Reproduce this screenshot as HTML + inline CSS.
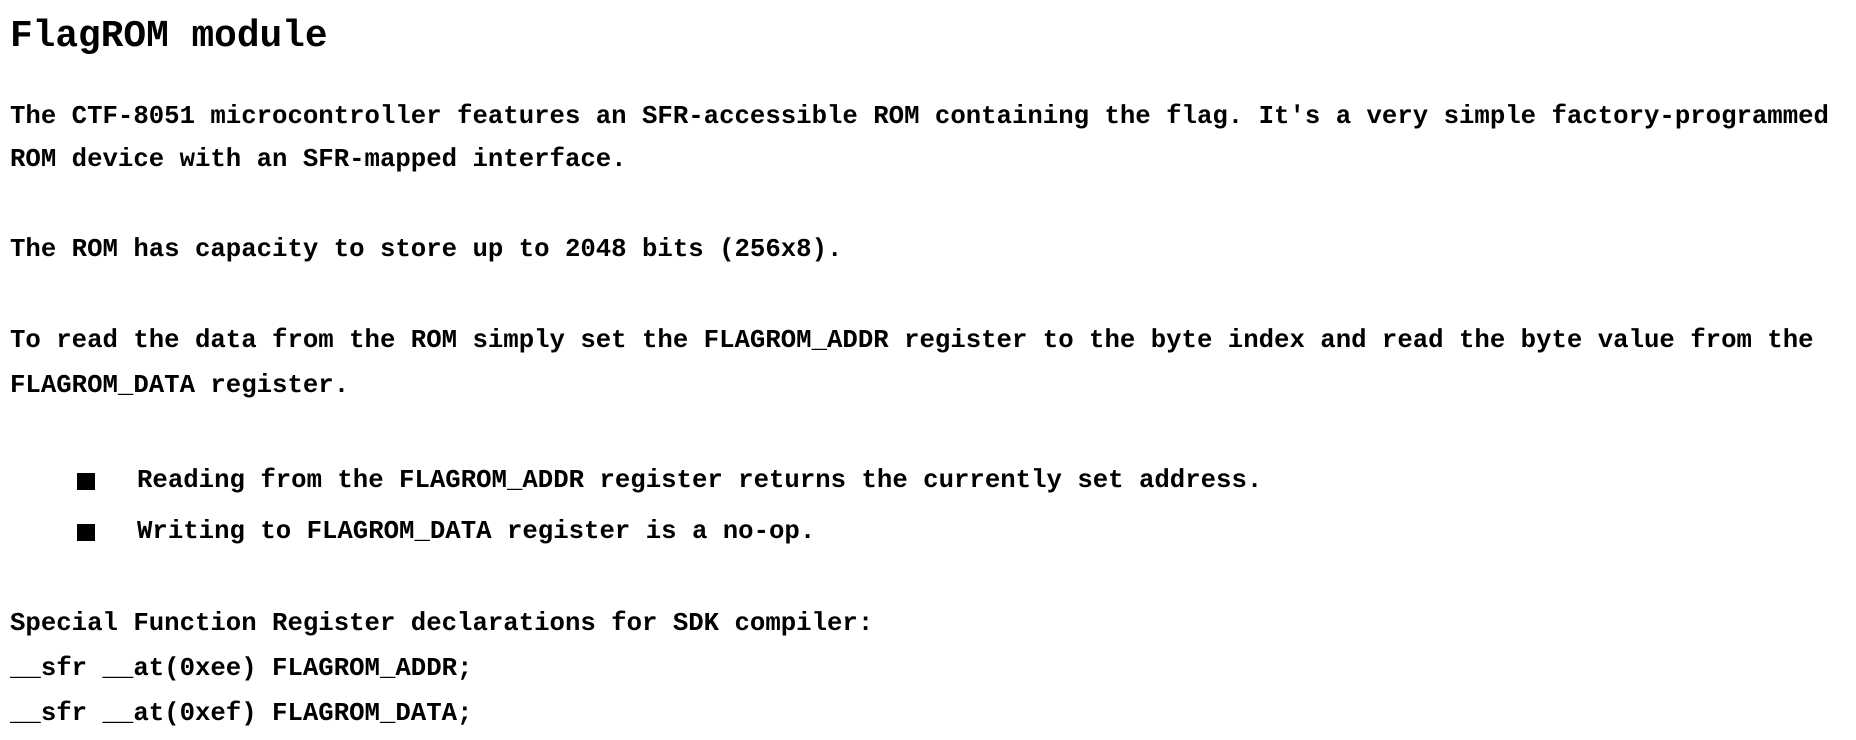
<!DOCTYPE html>
<html><head><style>
body{margin:0;width:1856px;height:740px;background:#fff;overflow:hidden;position:relative;}
.l{position:absolute;left:10px;font-family:"Liberation Mono",monospace;font-weight:bold;font-size:25.7px;line-height:46px;height:46px;white-space:pre;color:#000;}
.t{font-size:37.8px;}
.b{position:absolute;width:18px;height:17px;background:#000;left:77px;}
</style></head><body>
<div class="l t" style="top:14px">FlagROM module</div>
<div class="l" style="top:94px">The CTF-8051 microcontroller features an SFR-accessible ROM containing the flag. It's a very simple factory-programmed</div>
<div class="l" style="top:137px">ROM device with an SFR-mapped interface.</div>
<div class="l" style="top:227px">The ROM has capacity to store up to 2048 bits (256x8).</div>
<div class="l" style="top:318px">To read the data from the ROM simply set the FLAGROM_ADDR register to the byte index and read the byte value from the</div>
<div class="l" style="top:363px">FLAGROM_DATA register.</div>
<div class="b" style="top:473px"></div>
<div class="l" style="top:458px;left:137px">Reading from the FLAGROM_ADDR register returns the currently set address.</div>
<div class="b" style="top:524px"></div>
<div class="l" style="top:509px;left:137px">Writing to FLAGROM_DATA register is a no-op.</div>
<div class="l" style="top:601px">Special Function Register declarations for SDK compiler:</div>
<div class="l" style="top:646px">__sfr __at(0xee) FLAGROM_ADDR;</div>
<div class="l" style="top:691px">__sfr __at(0xef) FLAGROM_DATA;</div>
</body></html>
